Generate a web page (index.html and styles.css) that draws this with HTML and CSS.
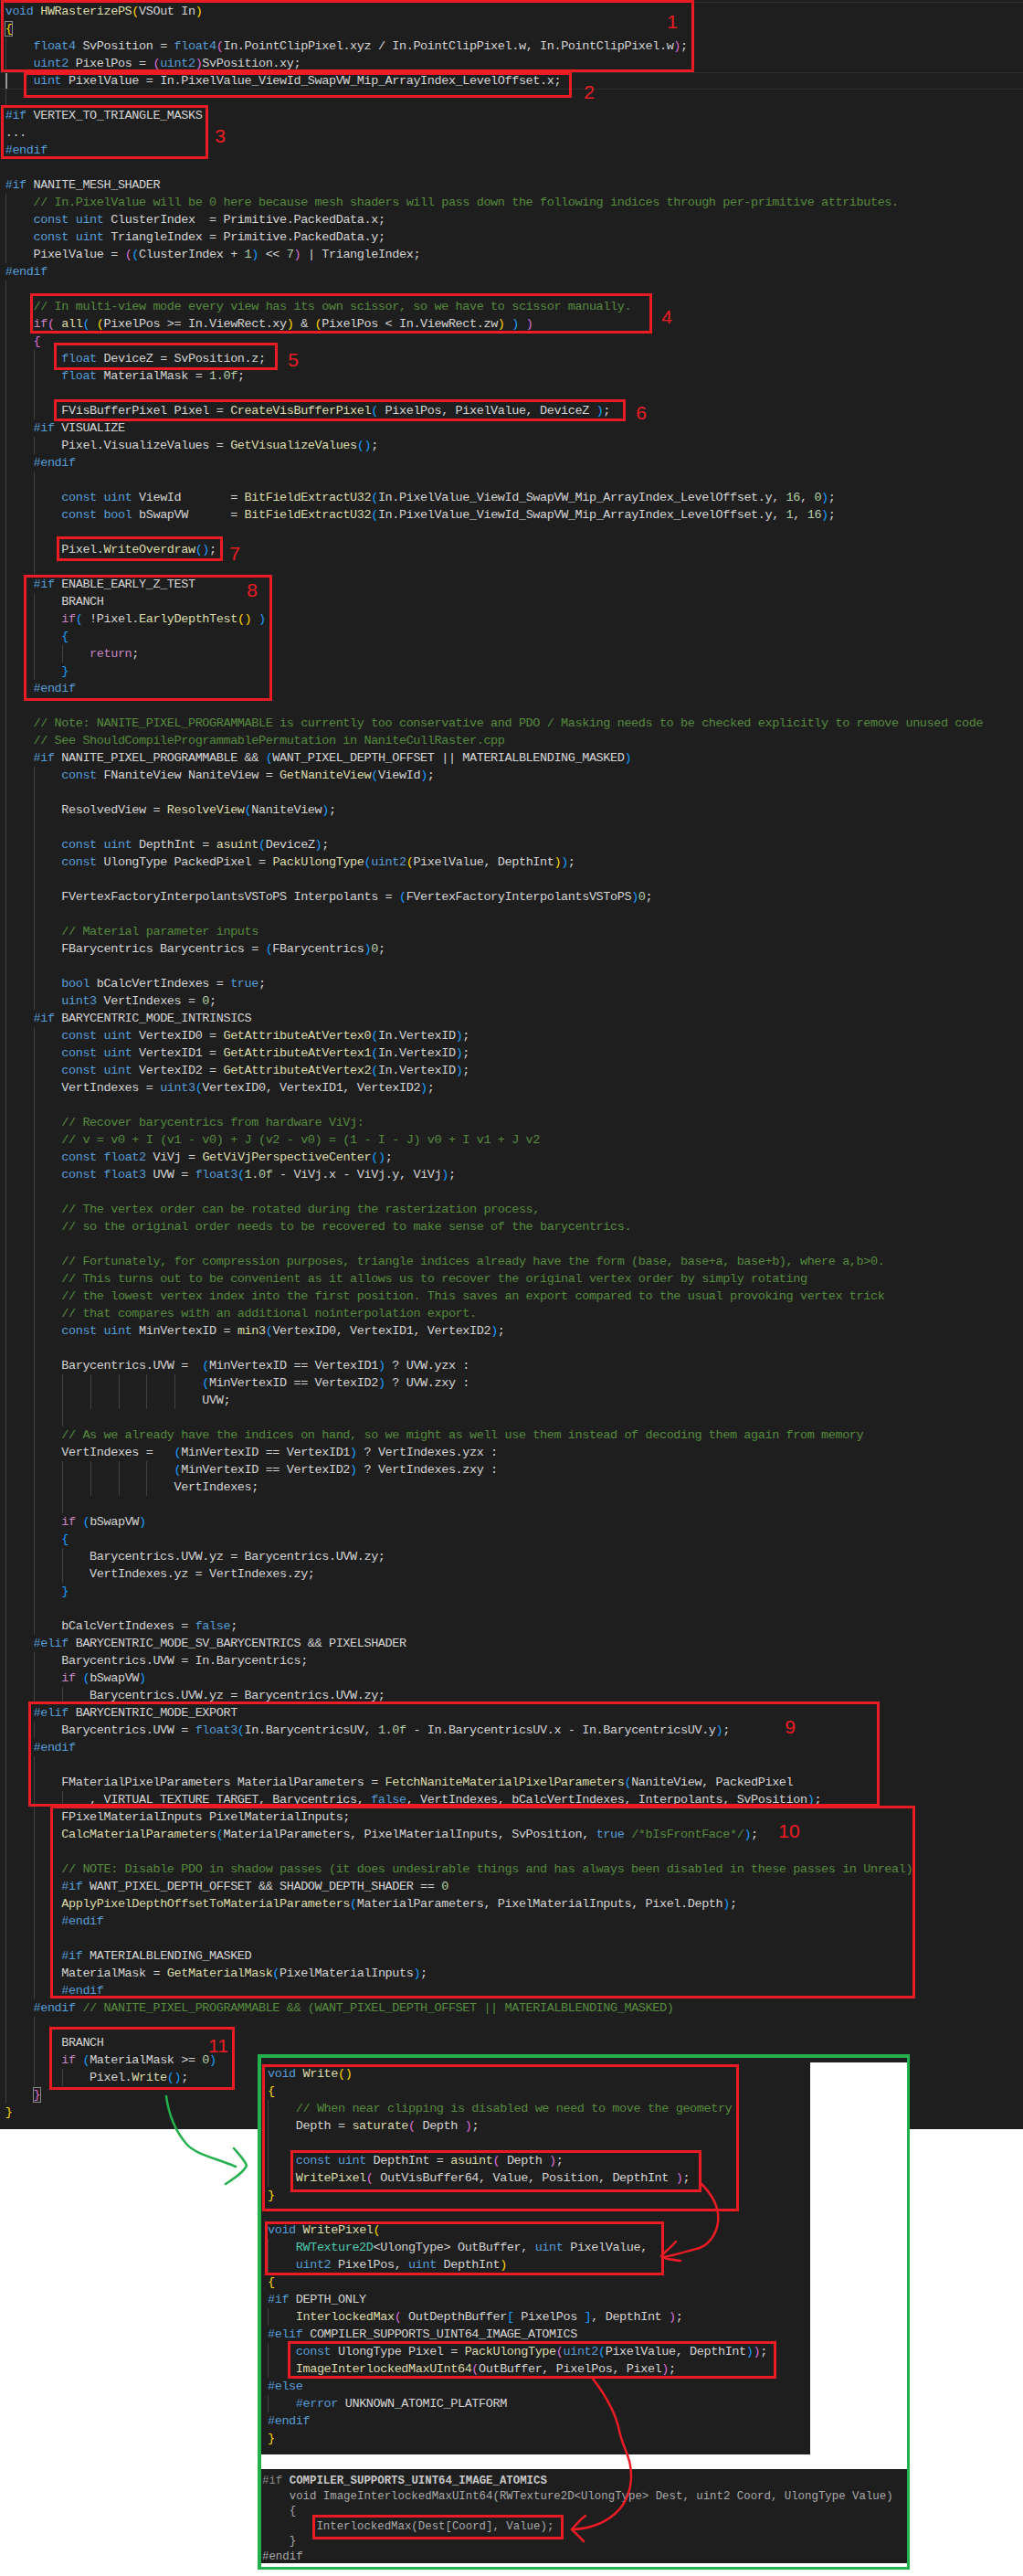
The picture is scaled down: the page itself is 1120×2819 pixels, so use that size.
FILE: index.html
```html
<!DOCTYPE html>
<html lang="en">
<head>
<meta charset="utf-8">
<title>HWRasterizePS</title>
<link rel="stylesheet" href="styles.css">
</head>
<body>
<div class="page">
<main class="editor">
<div class="ln"><i class="kw">void</i> <i class="fn">HWRasterizePS</i><i class="b1">(</i>VSOut In<i class="b1">)</i></div>
<div class="ln"><i class="b1 match">{</i></div>
<div class="ln g1">    <i class="kw">float4</i> SvPosition = <i class="kw">float4</i><i class="b2">(</i>In.PointClipPixel.xyz / In.PointClipPixel.w, In.PointClipPixel.w<i class="b2">)</i>;</div>
<div class="ln g1">    <i class="kw">uint2</i> PixelPos = <i class="b2">(</i><i class="kw">uint2</i><i class="b2">)</i>SvPosition.xy;</div>
<div class="ln g1 cur">    <i class="kw">uint</i> PixelValue = In.PixelValue_ViewId_SwapVW_Mip_ArrayIndex_LevelOffset.x;</div>
<div class="ln g1"></div>
<div class="ln"><i class="kw">#if</i> VERTEX_TO_TRIANGLE_MASKS</div>
<div class="ln">...</div>
<div class="ln"><i class="kw">#endif</i></div>
<div class="ln"></div>
<div class="ln"><i class="kw">#if</i> NANITE_MESH_SHADER</div>
<div class="ln g1">    <i class="cm">// In.PixelValue will be 0 here because mesh shaders will pass down the following indices through per-primitive attributes.</i></div>
<div class="ln g1">    <i class="kw">const</i> <i class="kw">uint</i> ClusterIndex  = Primitive.PackedData.x;</div>
<div class="ln g1">    <i class="kw">const</i> <i class="kw">uint</i> TriangleIndex = Primitive.PackedData.y;</div>
<div class="ln g1">    PixelValue = <i class="b2">(</i><i class="b3">(</i>ClusterIndex + <i class="nu">1</i><i class="b3">)</i> &lt;&lt; <i class="nu">7</i><i class="b2">)</i> | TriangleIndex;</div>
<div class="ln"><i class="kw">#endif</i></div>
<div class="ln g1"></div>
<div class="ln g1">    <i class="cm">// In multi-view mode every view has its own scissor, so we have to scissor manually.</i></div>
<div class="ln g1">    <i class="ct">if</i><i class="b2">(</i> <i class="fn">all</i><i class="b3">(</i> <i class="b1">(</i>PixelPos &gt;= In.ViewRect.xy<i class="b1">)</i> &amp; <i class="b1">(</i>PixelPos &lt; In.ViewRect.zw<i class="b1">)</i> <i class="b3">)</i> <i class="b2">)</i></div>
<div class="ln g1">    <i class="b2">{</i></div>
<div class="ln g2">        <i class="kw">float</i> DeviceZ = SvPosition.z;</div>
<div class="ln g2">        <i class="kw">float</i> MaterialMask = <i class="nu">1.0f</i>;</div>
<div class="ln g2"></div>
<div class="ln g2">        FVisBufferPixel Pixel = <i class="fn">CreateVisBufferPixel</i><i class="b3">(</i> PixelPos, PixelValue, DeviceZ <i class="b3">)</i>;</div>
<div class="ln g1">    <i class="kw">#if</i> VISUALIZE</div>
<div class="ln g2">        Pixel.VisualizeValues = <i class="fn">GetVisualizeValues</i><i class="b3">()</i>;</div>
<div class="ln g1">    <i class="kw">#endif</i></div>
<div class="ln g2"></div>
<div class="ln g2">        <i class="kw">const</i> <i class="kw">uint</i> ViewId       = <i class="fn">BitFieldExtractU32</i><i class="b3">(</i>In.PixelValue_ViewId_SwapVW_Mip_ArrayIndex_LevelOffset.y, <i class="nu">16</i>, <i class="nu">0</i><i class="b3">)</i>;</div>
<div class="ln g2">        <i class="kw">const</i> <i class="kw">bool</i> bSwapVW      = <i class="fn">BitFieldExtractU32</i><i class="b3">(</i>In.PixelValue_ViewId_SwapVW_Mip_ArrayIndex_LevelOffset.y, <i class="nu">1</i>, <i class="nu">16</i><i class="b3">)</i>;</div>
<div class="ln g2"></div>
<div class="ln g2">        Pixel.<i class="fn">WriteOverdraw</i><i class="b3">()</i>;</div>
<div class="ln g2"></div>
<div class="ln g1">    <i class="kw">#if</i> ENABLE_EARLY_Z_TEST</div>
<div class="ln g2">        BRANCH</div>
<div class="ln g2">        <i class="ct">if</i><i class="b3">(</i> !Pixel.<i class="fn">EarlyDepthTest</i><i class="b1">()</i> <i class="b3">)</i></div>
<div class="ln g2">        <i class="b3">{</i></div>
<div class="ln g3">            <i class="ct">return</i>;</div>
<div class="ln g2">        <i class="b3">}</i></div>
<div class="ln g1">    <i class="kw">#endif</i></div>
<div class="ln g1"></div>
<div class="ln g1">    <i class="cm">// Note: NANITE_PIXEL_PROGRAMMABLE is currently too conservative and PDO / Masking needs to be checked explicitly to remove unused code</i></div>
<div class="ln g1">    <i class="cm">// See ShouldCompileProgrammablePermutation in NaniteCullRaster.cpp</i></div>
<div class="ln g1">    <i class="kw">#if</i> NANITE_PIXEL_PROGRAMMABLE &amp;&amp; <i class="b3">(</i>WANT_PIXEL_DEPTH_OFFSET || MATERIALBLENDING_MASKED<i class="b3">)</i></div>
<div class="ln g2">        <i class="kw">const</i> FNaniteView NaniteView = <i class="fn">GetNaniteView</i><i class="b3">(</i>ViewId<i class="b3">)</i>;</div>
<div class="ln g2"></div>
<div class="ln g2">        ResolvedView = <i class="fn">ResolveView</i><i class="b3">(</i>NaniteView<i class="b3">)</i>;</div>
<div class="ln g2"></div>
<div class="ln g2">        <i class="kw">const</i> <i class="kw">uint</i> DepthInt = <i class="fn">asuint</i><i class="b3">(</i>DeviceZ<i class="b3">)</i>;</div>
<div class="ln g2">        <i class="kw">const</i> UlongType PackedPixel = <i class="fn">PackUlongType</i><i class="b3">(</i><i class="kw">uint2</i><i class="b1">(</i>PixelValue, DepthInt<i class="b1">)</i><i class="b3">)</i>;</div>
<div class="ln g2"></div>
<div class="ln g2">        FVertexFactoryInterpolantsVSToPS Interpolants = <i class="b3">(</i>FVertexFactoryInterpolantsVSToPS<i class="b3">)</i><i class="nu">0</i>;</div>
<div class="ln g2"></div>
<div class="ln g2">        <i class="cm">// Material parameter inputs</i></div>
<div class="ln g2">        FBarycentrics Barycentrics = <i class="b3">(</i>FBarycentrics<i class="b3">)</i><i class="nu">0</i>;</div>
<div class="ln g2"></div>
<div class="ln g2">        <i class="kw">bool</i> bCalcVertIndexes = <i class="kw">true</i>;</div>
<div class="ln g2">        <i class="kw">uint3</i> VertIndexes = <i class="nu">0</i>;</div>
<div class="ln g1">    <i class="kw">#if</i> BARYCENTRIC_MODE_INTRINSICS</div>
<div class="ln g2">        <i class="kw">const</i> <i class="kw">uint</i> VertexID0 = <i class="fn">GetAttributeAtVertex0</i><i class="b3">(</i>In.VertexID<i class="b3">)</i>;</div>
<div class="ln g2">        <i class="kw">const</i> <i class="kw">uint</i> VertexID1 = <i class="fn">GetAttributeAtVertex1</i><i class="b3">(</i>In.VertexID<i class="b3">)</i>;</div>
<div class="ln g2">        <i class="kw">const</i> <i class="kw">uint</i> VertexID2 = <i class="fn">GetAttributeAtVertex2</i><i class="b3">(</i>In.VertexID<i class="b3">)</i>;</div>
<div class="ln g2">        VertIndexes = <i class="kw">uint3</i><i class="b3">(</i>VertexID0, VertexID1, VertexID2<i class="b3">)</i>;</div>
<div class="ln g2"></div>
<div class="ln g2">        <i class="cm">// Recover barycentrics from hardware ViVj:</i></div>
<div class="ln g2">        <i class="cm">// v = v0 + I (v1 - v0) + J (v2 - v0) = (1 - I - J) v0 + I v1 + J v2</i></div>
<div class="ln g2">        <i class="kw">const</i> <i class="kw">float2</i> ViVj = <i class="fn">GetViVjPerspectiveCenter</i><i class="b3">()</i>;</div>
<div class="ln g2">        <i class="kw">const</i> <i class="kw">float3</i> UVW = <i class="kw">float3</i><i class="b3">(</i><i class="nu">1.0f</i> - ViVj.x - ViVj.y, ViVj<i class="b3">)</i>;</div>
<div class="ln g2"></div>
<div class="ln g2">        <i class="cm">// The vertex order can be rotated during the rasterization process,</i></div>
<div class="ln g2">        <i class="cm">// so the original order needs to be recovered to make sense of the barycentrics.</i></div>
<div class="ln g2"></div>
<div class="ln g2">        <i class="cm">// Fortunately, for compression purposes, triangle indices already have the form (base, base+a, base+b), where a,b&gt;0.</i></div>
<div class="ln g2">        <i class="cm">// This turns out to be convenient as it allows us to recover the original vertex order by simply rotating</i></div>
<div class="ln g2">        <i class="cm">// the lowest vertex index into the first position. This saves an export compared to the usual provoking vertex trick</i></div>
<div class="ln g2">        <i class="cm">// that compares with an additional nointerpolation export.</i></div>
<div class="ln g2">        <i class="kw">const</i> <i class="kw">uint</i> MinVertexID = <i class="fn">min3</i><i class="b3">(</i>VertexID0, VertexID1, VertexID2<i class="b3">)</i>;</div>
<div class="ln g2"></div>
<div class="ln g2">        Barycentrics.UVW =  <i class="b3">(</i>MinVertexID == VertexID1<i class="b3">)</i> ? UVW.yzx :</div>
<div class="ln g7">                            <i class="b3">(</i>MinVertexID == VertexID2<i class="b3">)</i> ? UVW.zxy :</div>
<div class="ln g7">                            UVW;</div>
<div class="ln g3"></div>
<div class="ln g2">        <i class="cm">// As we already have the indices on hand, so we might as well use them instead of decoding them again from memory</i></div>
<div class="ln g2">        VertIndexes =   <i class="b3">(</i>MinVertexID == VertexID1<i class="b3">)</i> ? VertIndexes.yzx :</div>
<div class="ln g6">                        <i class="b3">(</i>MinVertexID == VertexID2<i class="b3">)</i> ? VertIndexes.zxy :</div>
<div class="ln g6">                        VertIndexes;</div>
<div class="ln g3"></div>
<div class="ln g2">        <i class="ct">if</i> <i class="b3">(</i>bSwapVW<i class="b3">)</i></div>
<div class="ln g2">        <i class="b3">{</i></div>
<div class="ln g3">            Barycentrics.UVW.yz = Barycentrics.UVW.zy;</div>
<div class="ln g3">            VertIndexes.yz = VertIndexes.zy;</div>
<div class="ln g2">        <i class="b3">}</i></div>
<div class="ln g2"></div>
<div class="ln g2">        bCalcVertIndexes = <i class="kw">false</i>;</div>
<div class="ln g1">    <i class="kw">#elif</i> BARYCENTRIC_MODE_SV_BARYCENTRICS &amp;&amp; PIXELSHADER</div>
<div class="ln g2">        Barycentrics.UVW = In.Barycentrics;</div>
<div class="ln g2">        <i class="ct">if</i> <i class="b3">(</i>bSwapVW<i class="b3">)</i></div>
<div class="ln g3">            Barycentrics.UVW.yz = Barycentrics.UVW.zy;</div>
<div class="ln g1">    <i class="kw">#elif</i> BARYCENTRIC_MODE_EXPORT</div>
<div class="ln g2">        Barycentrics.UVW = <i class="kw">float3</i><i class="b3">(</i>In.BarycentricsUV, <i class="nu">1.0f</i> - In.BarycentricsUV.x - In.BarycentricsUV.y<i class="b3">)</i>;</div>
<div class="ln g1">    <i class="kw">#endif</i></div>
<div class="ln g2"></div>
<div class="ln g2">        FMaterialPixelParameters MaterialParameters = <i class="fn">FetchNaniteMaterialPixelParameters</i><i class="b3">(</i>NaniteView, PackedPixel</div>
<div class="ln g3">            , VIRTUAL_TEXTURE_TARGET, Barycentrics, <i class="kw">false</i>, VertIndexes, bCalcVertIndexes, Interpolants, SvPosition<i class="b3">)</i>;</div>
<div class="ln g2">        FPixelMaterialInputs PixelMaterialInputs;</div>
<div class="ln g2">        <i class="fn">CalcMaterialParameters</i><i class="b3">(</i>MaterialParameters, PixelMaterialInputs, SvPosition, <i class="kw">true</i> <i class="cm">/*bIsFrontFace*/</i><i class="b3">)</i>;</div>
<div class="ln g2"></div>
<div class="ln g2">        <i class="cm">// NOTE: Disable PDO in shadow passes (it does undesirable things and has always been disabled in these passes in Unreal)</i></div>
<div class="ln g2">        <i class="kw">#if</i> WANT_PIXEL_DEPTH_OFFSET &amp;&amp; SHADOW_DEPTH_SHADER == <i class="nu">0</i></div>
<div class="ln g2">        <i class="fn">ApplyPixelDepthOffsetToMaterialParameters</i><i class="b3">(</i>MaterialParameters, PixelMaterialInputs, Pixel.Depth<i class="b3">)</i>;</div>
<div class="ln g2">        <i class="kw">#endif</i></div>
<div class="ln g2"></div>
<div class="ln g2">        <i class="kw">#if</i> MATERIALBLENDING_MASKED</div>
<div class="ln g2">        MaterialMask = <i class="fn">GetMaterialMask</i><i class="b3">(</i>PixelMaterialInputs<i class="b3">)</i>;</div>
<div class="ln g2">        <i class="kw">#endif</i></div>
<div class="ln g1">    <i class="kw">#endif</i> <i class="cm">// NANITE_PIXEL_PROGRAMMABLE &amp;&amp; (WANT_PIXEL_DEPTH_OFFSET || MATERIALBLENDING_MASKED)</i></div>
<div class="ln g2"></div>
<div class="ln g2">        BRANCH</div>
<div class="ln g2">        <i class="ct">if</i> <i class="b3">(</i>MaterialMask &gt;= <i class="nu">0</i><i class="b3">)</i></div>
<div class="ln g3">            Pixel.<i class="fn">Write</i><i class="b3">()</i>;</div>
<div class="ln g1">    <i class="b2 match">}</i></div>
<div class="ln"><i class="b1">}</i></div>
</main>

<div class="frame"></div>

<section class="snippet write">
<div class="ln"><i class="kw">void</i> <i class="fn">Write</i><i class="b1">()</i></div>
<div class="ln"><i class="b1">{</i></div>
<div class="ln ig">    <i class="cm">// When near clipping is disabled we need to move the geometry</i></div>
<div class="ln ig">    Depth = <i class="fn">saturate</i><i class="b2">(</i> Depth <i class="b2">)</i>;</div>
<div class="ln ig"></div>
<div class="ln ig">    <i class="kw">const</i> <i class="kw">uint</i> DepthInt = <i class="fn">asuint</i><i class="b2">(</i> Depth <i class="b2">)</i>;</div>
<div class="ln ig">    <i class="fn">WritePixel</i><i class="b2">(</i> OutVisBuffer64, Value, Position, DepthInt <i class="b2">)</i>;</div>
<div class="ln"><i class="b1">}</i></div>
<div class="ln"></div>
<div class="ln"><i class="kw">void</i> <i class="fn">WritePixel</i><i class="b1">(</i></div>
<div class="ln ig">    <i class="ty">RWTexture2D</i>&lt;UlongType&gt; OutBuffer, <i class="kw">uint</i> PixelValue,</div>
<div class="ln ig">    <i class="kw">uint2</i> PixelPos, <i class="kw">uint</i> DepthInt<i class="b1">)</i></div>
<div class="ln"><i class="b1">{</i></div>
<div class="ln"><i class="kw">#if</i> DEPTH_ONLY</div>
<div class="ln ig">    <i class="fn">InterlockedMax</i><i class="b2">(</i> OutDepthBuffer<i class="b3">[</i> PixelPos <i class="b3">]</i>, DepthInt <i class="b2">)</i>;</div>
<div class="ln"><i class="kw">#elif</i> COMPILER_SUPPORTS_UINT64_IMAGE_ATOMICS</div>
<div class="ln ig">    <i class="kw">const</i> UlongType Pixel = <i class="fn">PackUlongType</i><i class="b2">(</i><i class="kw">uint2</i><i class="b3">(</i>PixelValue, DepthInt<i class="b3">)</i><i class="b2">)</i>;</div>
<div class="ln ig">    <i class="fn">ImageInterlockedMaxUInt64</i><i class="b2">(</i>OutBuffer, PixelPos, Pixel<i class="b2">)</i>;</div>
<div class="ln"><i class="kw">#else</i></div>
<div class="ln ig">    <i class="kw">#error</i> UNKNOWN_ATOMIC_PLATFORM</div>
<div class="ln"><i class="kw">#endif</i></div>
<div class="ln"><i class="b1">}</i></div>
</section>

<section class="snippet atomics">
<div class="ln"><i class="dim">#if</i> <b>COMPILER_SUPPORTS_UINT64_IMAGE_ATOMICS</b></div>
<div class="ln">    void ImageInterlockedMaxUInt64(RWTexture2D&lt;UlongType&gt; Dest, uint2 Coord, UlongType Value)</div>
<div class="ln">    {</div>
<div class="ln">        InterlockedMax(Dest[Coord], Value);</div>
<div class="ln">    }</div>
<div class="ln">#endif</div>
</section>

<div class="box b-1"></div><div class="box b-2"></div><div class="box b-3"></div><div class="box b-4"></div>
<div class="box b-5"></div><div class="box b-6"></div><div class="box b-7"></div><div class="box b-8"></div>
<div class="box b-9"></div><div class="box b-10"></div><div class="box b-11"></div>
<div class="box b-a"></div><div class="box b-b"></div><div class="box b-c"></div><div class="box b-d"></div><div class="box b-e"></div>

<span class="num n-1">1</span><span class="num n-2">2</span><span class="num n-3">3</span><span class="num n-4">4</span>
<span class="num n-5">5</span><span class="num n-6">6</span><span class="num n-7">7</span><span class="num n-8">8</span>
<span class="num n-9">9</span><span class="num n-10">10</span><span class="num n-11">11</span>

<svg class="arrows" viewBox="0 0 1120 2819" width="1120" height="2819" aria-hidden="true">
  <path class="ag" d="M182 2294C185 2316 192 2332 204 2346C214 2358 238 2362 258 2371"/>
  <path class="ag" d="M256 2351C262 2358 268 2364 270 2370C266 2378 256 2384 247 2390"/>
  <path class="ar" d="M768 2390C780 2402 788 2416 786 2432C784 2446 776 2456 766 2460C752 2464 738 2468 727 2470"/>
  <path class="ar" d="M740 2453C734 2460 728 2464 724 2469C726 2472 736 2473 745 2474"/>
  <path class="ar" d="M649 2603C662 2620 674 2640 678 2660C682 2680 692 2690 691 2712C690 2730 684 2742 672 2752C660 2762 644 2767 628 2768"/>
  <path class="ar" d="M641 2753C634 2758 630 2764 626 2768C630 2772 636 2778 639 2781"/>
</svg>
</div>
</body>
</html>
```

FILE: styles.css
```css
html, body {
  margin: 0;
  background: #fff;
}
.page {
  position: relative;
  width: 1120px;
  height: 2819px;
  overflow: hidden;
  font-family: "Liberation Mono", "DejaVu Sans Mono", monospace;
  font-size: 13.5px;
  letter-spacing: -0.4px;
  color: #d4d4d4;
  --guide: #404040;
}
i { font-style: normal; }

.editor {
  height: 2330px;
  box-sizing: border-box;
  padding-top: 3px;
  background: #1e1e1e linear-gradient(#303030, #303030) 0 2px / 100% 1px no-repeat;
}
.ln {
  height: 19px;
  line-height: 19px;
  padding-left: 5.7px;
  white-space: pre;
  --g: linear-gradient(var(--guide), var(--guide));
  background-repeat: no-repeat;
  background-size: 1px 100%;
}
.g1 { background-image: var(--g); background-position: 6px 0; }
.g2 { background-image: var(--g), var(--g); background-position: 6px 0, 37px 0; }
.g3 { background-image: var(--g), var(--g), var(--g); background-position: 6px 0, 37px 0, 68px 0; }
.g6 { background-image: var(--g), var(--g), var(--g), var(--g), var(--g), var(--g); background-position: 6px 0, 37px 0, 68px 0, 99px 0, 130px 0, 160px 0; }
.g7 { background-image: var(--g), var(--g), var(--g), var(--g), var(--g), var(--g), var(--g); background-position: 6px 0, 37px 0, 68px 0, 99px 0, 130px 0, 160px 0, 191px 0; }
.cur {
  --guide: #9a9a9a;
  background-size: 2px 100%;
  box-shadow: inset 0 1px #2e2e2e, inset 0 -1px #2e2e2e;
}

.kw { color: #569cd6; }
.cm { color: #57893f; }
.fn { color: #dcdcaa; }
.nu { color: #b5cea8; }
.ct { color: #c586c0; }
.ty { color: #4ec9b0; }
.b1 { color: #ffd700; }
.b2 { color: #da70d6; }
.b3 { color: #179fff; }
.match { outline: 1px solid #8a8a8a; outline-offset: 0; }

.snippet {
  position: absolute;
  left: 286px;
  background: #1e1e1e;
  box-sizing: border-box;
}
.write {
  top: 2257px;
  width: 601px;
  height: 429px;
  padding-top: 3px;
}
.write .ln { padding-left: 7px; }
.ig { background-image: var(--g); background-position: 7px 0; }
.atomics {
  top: 2702px;
  width: 707px;
  height: 103px;
  padding-top: 5px;
  font-size: 12.4px;
  letter-spacing: -0.01px;
  color: #a9a9a9;
}
.atomics .ln {
  height: 16.6px;
  line-height: 16.6px;
  padding-left: 1px;
}
.atomics b { color: #c8c8c8; }
.dim { color: #8c8c8c; }

.frame {
  position: absolute;
  left: 282px;
  top: 2248px;
  width: 714px;
  height: 564px;
  box-sizing: border-box;
  background: #fff linear-gradient(#1e1e1e, #1e1e1e) 0 0 / 100% 5px no-repeat;
  border: solid #22b14c;
  border-width: 4px 3px 3px 4px;
}
.box {
  position: absolute;
  box-sizing: border-box;
  border: 3px solid #ed1c24;
}
.b-1 { left: 1px; top: 0; width: 759px; height: 79px; }
.b-2 { left: 26px; top: 79px; width: 600px; height: 28px; }
.b-3 { left: 1px; top: 115px; width: 227px; height: 59px; }
.b-4 { left: 33px; top: 321px; width: 681px; height: 44px; }
.b-5 { left: 59px; top: 375px; width: 245px; height: 30px; }
.b-6 { left: 59px; top: 437px; width: 626px; height: 24px; }
.b-7 { left: 62px; top: 587px; width: 182px; height: 27px; }
.b-8 { left: 26px; top: 629px; width: 272px; height: 138px; }
.b-9 { left: 31px; top: 1862px; width: 932px; height: 115px; }
.b-10 { left: 55px; top: 1976px; width: 947px; height: 211px; }
.b-11 { left: 54px; top: 2218px; width: 203px; height: 69px; }
.b-a { left: 287px; top: 2259px; width: 522px; height: 161px; }
.b-b { left: 318px; top: 2353px; width: 450px; height: 46px; }
.b-c { left: 290px; top: 2431px; width: 437px; height: 59px; }
.b-d { left: 315px; top: 2562px; width: 535px; height: 41px; }
.b-e { left: 342px; top: 2752px; width: 275px; height: 27px; }

.num {
  position: absolute;
  transform: translate(-50%, -50%);
  font-family: "Liberation Sans", Arial, sans-serif;
  font-size: 21px;
  line-height: 1;
  letter-spacing: 0;
  color: #ed1c24;
}
.n-1 { left: 736px; top: 23px; }
.n-2 { left: 645px; top: 100px; }
.n-3 { left: 241px; top: 148px; }
.n-4 { left: 730px; top: 346px; }
.n-5 { left: 321px; top: 393px; }
.n-6 { left: 702px; top: 451px; }
.n-7 { left: 257px; top: 605px; }
.n-8 { left: 276px; top: 645px; }
.n-9 { left: 865px; top: 1889px; }
.n-10 { left: 864px; top: 2003px; }
.n-11 { left: 239px; top: 2238px; }

.arrows {
  position: absolute;
  left: 0;
  top: 0;
  pointer-events: none;
}
.arrows path {
  fill: none;
  stroke-width: 2.5;
  stroke-linecap: round;
  stroke-linejoin: round;
}
.ag { stroke: #22b14c; }
.ar { stroke: #ed1c24; }
```
